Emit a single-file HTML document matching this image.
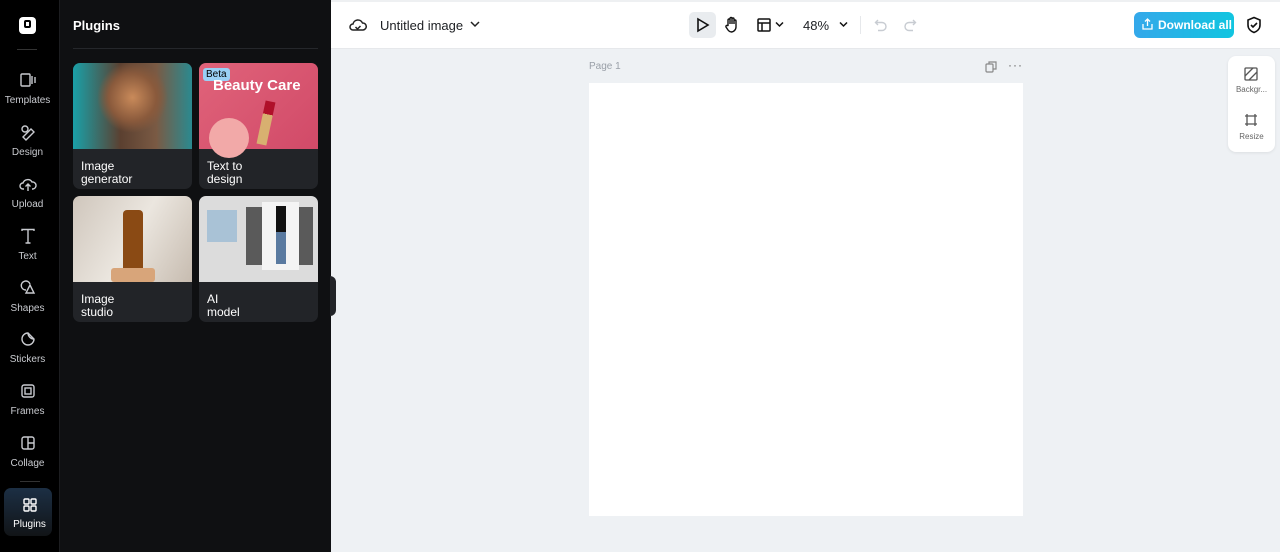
<!DOCTYPE html>
<html><head><style>
*{box-sizing:border-box;margin:0;padding:0}
body{width:1280px;height:552px;overflow:hidden;font-family:"Liberation Sans",sans-serif;background:#eef1f4;position:relative}
.lb{position:absolute;left:0;top:0;width:59px;height:552px;background:#000}
.pn{position:absolute;left:59px;top:0;width:272px;height:552px;background:#0f1012;border-left:1px solid #1c1d20}
.nav{position:absolute;left:0;width:55px;text-align:center;color:#c9cbd0;font-size:10px}
.nav svg{display:block;margin:0 auto 6px}
.card{position:absolute;width:119px;height:126px;background:#222428;border-radius:7px;overflow:hidden}
.card .im{height:86px}
.card .t{color:#fff;font-size:12px;line-height:13px;padding:11px 8px 0}
.top{position:absolute;left:331px;top:0;width:949px;height:49px;background:#fff;border-bottom:1px solid #e6e8eb}
.ic{position:absolute}
</style></head><body>
<div class="lb">
 <div style="position:absolute;left:19px;top:17px;width:17px;height:17px;background:#fff;border-radius:4px"><div style="position:absolute;left:5px;top:3px;width:7px;height:8px;border:2px solid #000;border-radius:2px"></div></div>
 <div style="position:absolute;left:17px;top:49px;width:20px;height:1px;background:#333"></div>
 <div class="nav" style="top:71px"><svg width="18" height="18" viewBox="0 0 18 18" fill="none" stroke="#c9cbd0" stroke-width="1.4"><rect x="2" y="3" width="9" height="12" rx="1"/><path d="M13 5v8M16 6v6"/></svg>Templates</div>
 <div class="nav" style="top:123px"><svg width="18" height="18" viewBox="0 0 18 18" fill="none" stroke="#c9cbd0" stroke-width="1.4"><circle cx="6" cy="6" r="3"/><path d="M4 14l8-8 3 3-8 8z"/></svg>Design</div>
 <div class="nav" style="top:175px"><svg width="18" height="18" viewBox="0 0 18 18" fill="none" stroke="#c9cbd0" stroke-width="1.4"><path d="M5 14H4a3 3 0 010-6 5 5 0 019-1 3.5 3.5 0 011 7h-1M9 16V9M6.5 11.5L9 9l2.5 2.5"/></svg>Upload</div>
 <div class="nav" style="top:227px"><svg width="18" height="18" viewBox="0 0 18 18" fill="none" stroke="#c9cbd0" stroke-width="1.4"><path d="M3 4V2.5h12V4M9 2.5V16M6.5 16h5"/></svg>Text</div>
 <div class="nav" style="top:279px"><svg width="18" height="18" viewBox="0 0 18 18" fill="none" stroke="#c9cbd0" stroke-width="1.4"><path d="M7 11a4.5 4.5 0 114-6M11 6l4 8H7z"/></svg>Shapes</div>
 <div class="nav" style="top:330px"><svg width="18" height="18" viewBox="0 0 18 18" fill="none" stroke="#c9cbd0" stroke-width="1.4"><path d="M15 9a6 6 0 11-6-6l6 6zM9 3a6 6 0 006 6"/></svg>Stickers</div>
 <div class="nav" style="top:382px"><svg width="18" height="18" viewBox="0 0 18 18" fill="none" stroke="#c9cbd0" stroke-width="1.4"><rect x="3" y="3" width="12" height="12" rx="2"/><rect x="6" y="6" width="6" height="6"/></svg>Frames</div>
 <div class="nav" style="top:434px"><svg width="18" height="18" viewBox="0 0 18 18" fill="none" stroke="#c9cbd0" stroke-width="1.4"><rect x="3" y="3" width="12" height="12" rx="2"/><path d="M9 3v12M9 9h6"/></svg>Collage</div>
 <div style="position:absolute;left:20px;top:481px;width:20px;height:1px;background:#333"></div>
 <div style="position:absolute;left:4px;top:488px;width:48px;height:48px;border-radius:7px;background:linear-gradient(#1c2f44,#111417)"></div>
 <div class="nav" style="top:496px;left:2px;color:#fff"><svg width="18" height="18" viewBox="0 0 18 18" fill="none" stroke="#fff" stroke-width="1.4" style="margin-bottom:5px"><rect x="3" y="3" width="5" height="5" rx="1"/><rect x="10" y="3" width="5" height="5" rx="1"/><rect x="3" y="10" width="5" height="5" rx="1"/><rect x="10" y="10" width="5" height="5" rx="1"/></svg>Plugins</div>
</div>
<div class="pn">
 <div style="position:absolute;left:13px;top:18px;color:#fff;font-weight:bold;font-size:13px">Plugins</div>
 <div style="position:absolute;left:13px;top:48px;width:245px;height:1px;background:#25272b"></div>
</div>
<div class="card" style="left:73px;top:63px"><div class="im" style="background:radial-gradient(circle at 50% 40%,#c98a5a 0,#8a5a3c 30%,transparent 45%),linear-gradient(90deg,#1aa0a8,#5b4030 40%,#7a5a44 70%,#2a8a90)"></div><div class="t">Image<br>generator</div></div>
<div class="card" style="left:199px;top:63px"><div class="im" style="background:linear-gradient(135deg,#e0637a,#d14a68);position:relative"><div style="position:absolute;left:4px;top:5px;background:#9ad0f5;color:#000;font-size:10px;padding:1px 3px;border-radius:3px">Beta</div><div style="position:absolute;left:14px;top:14px;color:#fff;font-weight:bold;font-size:15px">Beauty Care</div><div style="position:absolute;left:62px;top:38px;width:10px;height:44px;background:linear-gradient(#b0102a 30%,#d8b070 30%);transform:rotate(12deg)"></div><div style="position:absolute;left:10px;top:55px;width:40px;height:40px;border-radius:50%;background:#f2a9a8"></div></div><div class="t">Text to<br>design</div></div>
<div class="card" style="left:73px;top:196px"><div class="im" style="background:linear-gradient(120deg,#cfc6bc,#ebe6df 50%,#c7bcb0);position:relative"><div style="position:absolute;left:50px;top:14px;width:20px;height:60px;background:#8a4a14;border-radius:4px 4px 2px 2px"></div><div style="position:absolute;left:38px;top:72px;width:44px;height:14px;background:#d8a57a;border-radius:3px"></div></div><div class="t">Image<br>studio</div></div>
<div class="card" style="left:199px;top:196px"><div class="im" style="background:#dcdcdc;position:relative"><div style="position:absolute;left:8px;top:14px;width:30px;height:32px;background:#a9c2d6"></div><div style="position:absolute;left:47px;top:11px;width:67px;height:58px;background:#5a5a5a"></div><div style="position:absolute;left:63px;top:6px;width:37px;height:68px;background:#f4f4f4"></div><div style="position:absolute;left:77px;top:10px;width:10px;height:58px;background:linear-gradient(#111 45%,#5a7aa0 45%)"></div></div><div class="t">AI<br>model</div></div>
<div style="position:absolute;left:330px;top:276px;width:6px;height:40px;background:#222428;border-radius:0 6px 6px 0"></div>
<div class="top">
 <svg class="ic" style="left:18px;top:17px" width="18" height="16" viewBox="0 0 18 16" fill="none" stroke="#222" stroke-width="1.5"><path d="M5 13H4a3 3 0 010-6 5 5 0 019.5-1A3.5 3.5 0 0114 13z M6.5 10l2 2 3-3"/></svg>
 <div style="position:absolute;left:49px;top:18px;font-size:13px;color:#1d1f23">Untitled image</div>
 <svg class="ic" style="left:139px;top:20px" width="10" height="8" viewBox="0 0 10 8" fill="none" stroke="#222" stroke-width="1.5"><path d="M1 2l4 4 4-4"/></svg>
 <div style="position:absolute;left:358px;top:12px;width:27px;height:26px;background:#e9ecef;border-radius:5px"></div>
 <svg class="ic" style="left:365px;top:17px" width="14" height="16" viewBox="0 0 14 16" fill="none" stroke="#111" stroke-width="1.6"><path d="M2 2l10 6-10 6z"/></svg>
 <svg class="ic" style="left:393px;top:16px" width="16" height="17" viewBox="0 0 16 17" fill="none" stroke="#111" stroke-width="1.4"><path d="M4 9V4a1 1 0 012 0v4V2.5a1 1 0 012 0V8V3a1 1 0 012 0v5-3a1 1 0 012 0v6a5 5 0 01-5 5H8a5 5 0 01-4-2l-2-3a1 1 0 012-1z"/></svg>
 <svg class="ic" style="left:426px;top:18px" width="14" height="14" viewBox="0 0 14 14" fill="none" stroke="#111" stroke-width="1.5"><rect x="1" y="1" width="12" height="12" rx="1"/><path d="M1 5h12M5 5v8"/></svg>
 <svg class="ic" style="left:444px;top:21px" width="9" height="7" viewBox="0 0 9 7" fill="none" stroke="#111" stroke-width="1.5"><path d="M1 1.5l3.5 3.5 3.5-3.5"/></svg>
 <div style="position:absolute;left:472px;top:18px;font-size:13px;color:#1d1f23">48%</div>
 <svg class="ic" style="left:508px;top:21px" width="9" height="7" viewBox="0 0 9 7" fill="none" stroke="#111" stroke-width="1.5"><path d="M1 1.5l3.5 3.5 3.5-3.5"/></svg>
 <div style="position:absolute;left:529px;top:16px;width:1px;height:18px;background:#e6e8eb"></div>
 <svg class="ic" style="left:543px;top:18px" width="14" height="14" viewBox="0 0 14 14" fill="none" stroke="#c8ccd2" stroke-width="1.4"><path d="M4 2L1.5 4.5 4 7M1.5 4.5H8a4 4 0 010 8H4"/></svg>
 <svg class="ic" style="left:572px;top:18px" width="14" height="14" viewBox="0 0 14 14" fill="none" stroke="#c8ccd2" stroke-width="1.4"><path d="M10 2l2.5 2.5L10 7M12.5 4.5H6a4 4 0 000 8h4"/></svg>
 <div style="position:absolute;left:803px;top:12px;width:100px;height:26px;border-radius:6px;background:linear-gradient(90deg,#34a8ea,#11c5e0);color:#fff;font-size:12px;font-weight:bold;padding:6px 0 0 24px;white-space:nowrap">Download all</div>
 <svg class="ic" style="left:811px;top:18px" width="11" height="12" viewBox="0 0 11 12" fill="none" stroke="#fff" stroke-width="1.3"><path d="M5.5 8V1M3 3.5L5.5 1 8 3.5M1 6v5h9V6"/></svg>
 <svg class="ic" style="left:915px;top:16px" width="16" height="18" viewBox="0 0 16 18" fill="none" stroke="#111" stroke-width="1.6"><path d="M8 1.5l6 2.5v5c0 4-3 6.5-6 7.5-3-1-6-3.5-6-7.5V4z M5 9l2 2 4-4"/></svg>
</div>
<div style="position:absolute;left:331px;top:0;width:949px;height:2px;background:#eef0f2"></div>
<div style="position:absolute;left:589px;top:61px;font-size:10px;color:#9aa0a8">Page 1</div>
<svg class="ic" style="left:985px;top:61px" width="12" height="12" viewBox="0 0 12 12" fill="none" stroke="#888" stroke-width="1.2"><rect x="1" y="3" width="7" height="8" rx="1"/><path d="M4 3V1h7v7H8"/></svg>
<div style="position:absolute;left:1008px;top:58px;font-size:12px;color:#666;letter-spacing:1px">···</div>
<div style="position:absolute;left:589px;top:83px;width:434px;height:433px;background:#fff"></div>
<div style="position:absolute;left:1228px;top:56px;width:47px;height:96px;background:#fff;border-radius:8px;box-shadow:0 1px 3px rgba(0,0,0,.08)"></div>
<svg class="ic" style="left:1244px;top:67px" width="14" height="14" viewBox="0 0 14 14" fill="none" stroke="#555" stroke-width="1.3"><rect x="1" y="1" width="12" height="12" rx="1"/><path d="M1 9l8-8M5 13l8-8"/></svg>
<div style="position:absolute;left:1228px;top:85px;width:47px;text-align:center;font-size:8px;color:#666">Backgr...</div>
<svg class="ic" style="left:1244px;top:113px" width="14" height="14" viewBox="0 0 14 14" fill="none" stroke="#555" stroke-width="1.3"><path d="M3 1v12M11 1v12M1 3h12M1 11h12"/></svg>
<div style="position:absolute;left:1228px;top:132px;width:47px;text-align:center;font-size:8px;color:#666">Resize</div>
</body></html>
